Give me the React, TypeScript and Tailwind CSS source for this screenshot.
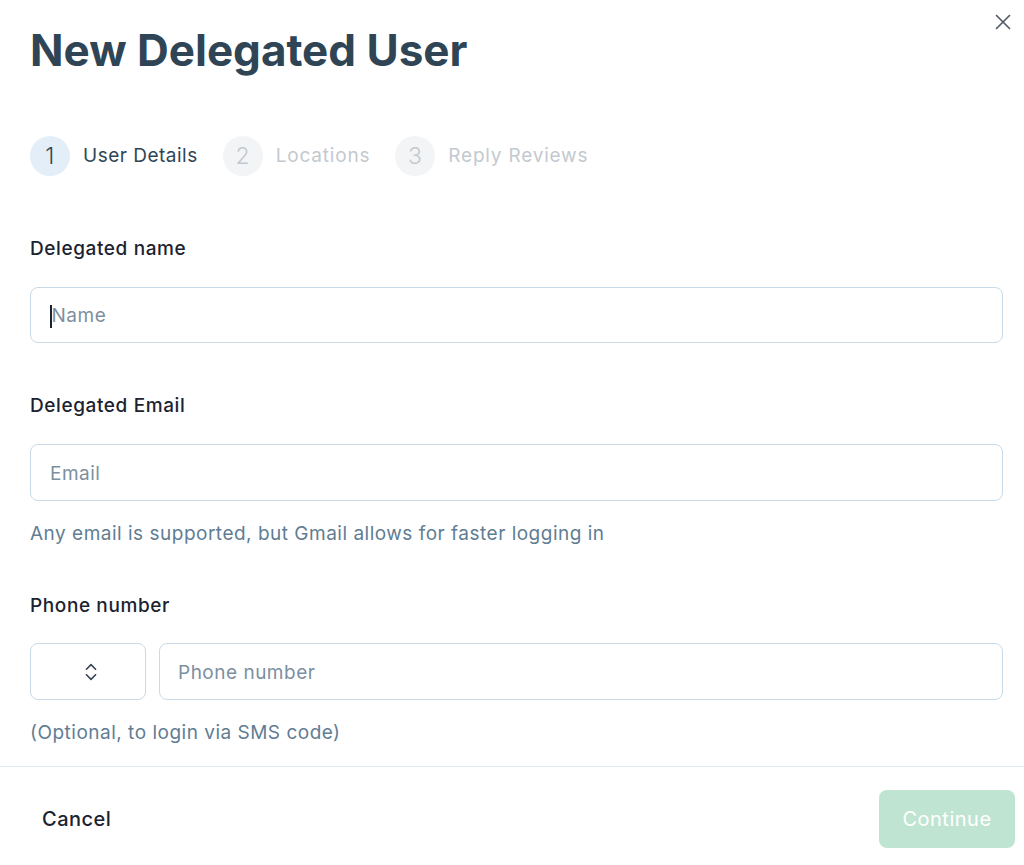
import React from "react";
import { X, ChevronsUpDown } from "lucide-react";

const steps = [
  { n: 1, label: "User Details", active: true },
  { n: 2, label: "Locations", active: false },
  { n: 3, label: "Reply Reviews", active: false },
];

export default function App() {
  return (
    <div
      className="relative w-[1024px] h-[865px] bg-white overflow-hidden tracking-[0.5px]"
      style={{ fontFamily: "Inter, 'Noto Sans', sans-serif" }}
    >
      <button className="absolute right-[8px] top-[9px] text-[#555d6b]">
        <X size={26} strokeWidth={1.6} />
      </button>

      <div className="pl-[30px] pr-[21px]">
        <h1 className="pt-[24px] text-[44px] leading-[52px] font-bold tracking-[0px] text-[#2f4556]">
          New Delegated User
        </h1>

        <div className="mt-[60px] flex items-center h-[40px]">
          {steps.map((s) => (
            <div key={s.n} className="flex items-center mr-[25px]">
              <div
                className={
                  s.active
                    ? "w-[40px] h-[40px] rounded-full bg-[#e4eef8] flex items-center justify-center text-[23px] font-light text-[#2f4556]"
                    : "w-[40px] h-[40px] rounded-full bg-[#f3f4f6] flex items-center justify-center text-[23px] font-light text-[#c3c9cf]"
                }
              >
                {s.n}
              </div>
              <span
                className={
                  s.active
                    ? "ml-[13px] text-[19px] tracking-[0.5px] text-[#2f4556]"
                    : "ml-[13px] text-[19px] tracking-[0.8px] text-[#c3c9cf]"
                }
              >
                {s.label}
              </span>
            </div>
          ))}
        </div>

        <div className="mt-[61px] text-[19px] leading-[24px] font-medium tracking-[0.6px] text-[#1b2330]">
          Delegated name
        </div>
        <div className="mt-[26px] h-[56px] rounded-[8px] border border-[#c9dbe8] flex items-center pl-[19px] pt-[3px] text-[19px]">
          <span className="w-[1.5px] h-[23px] bg-[#1b2330]" />
          <span className="text-[#7d8fa1]">Name</span>
        </div>

        <div className="mt-[51px] text-[19px] leading-[24px] font-medium tracking-[0.6px] text-[#1b2330]">
          Delegated Email
        </div>
        <div className="mt-[26px] h-[57px] rounded-[8px] border border-[#c9dbe8] flex items-center pl-[19px] pt-[3px] text-[19px] text-[#7d8fa1]">
          Email
        </div>
        <div className="mt-[21px] text-[19px] leading-[24px] text-[#5f7d93]">
          Any email is supported, but Gmail allows for faster logging in
        </div>

        <div className="mt-[48px] text-[19px] leading-[24px] font-medium tracking-[0.6px] text-[#1b2330]">
          Phone number
        </div>
        <div className="mt-[25px] flex gap-[13px]">
          <div className="w-[116px] h-[57px] rounded-[8px] border border-[#c9dbe8] flex items-center justify-center pl-[6px] text-[#3a4656]">
            <ChevronsUpDown size={22} strokeWidth={1.8} />
          </div>
          <div className="flex-1 h-[57px] rounded-[8px] border border-[#c9dbe8] flex items-center pl-[18px] pt-[3px] text-[19px] text-[#7d8fa1]">
            Phone number
          </div>
        </div>
        <div className="mt-[21px] text-[19px] leading-[24px] text-[#5f7d93]">
          (Optional, to login via SMS code)
        </div>
      </div>

      <div className="mt-[21px] border-t border-[#e2e8ef]" />

      <div className="flex items-center justify-between pl-[42px] pr-[9px] mt-[23px]">
        <span className="text-[20px] font-medium text-[#1b2330]">Cancel</span>
        <button className="w-[136px] h-[58px] rounded-[8px] bg-[#bfe5d2] text-white text-[20px]">
          Continue
        </button>
      </div>
    </div>
  );
}
